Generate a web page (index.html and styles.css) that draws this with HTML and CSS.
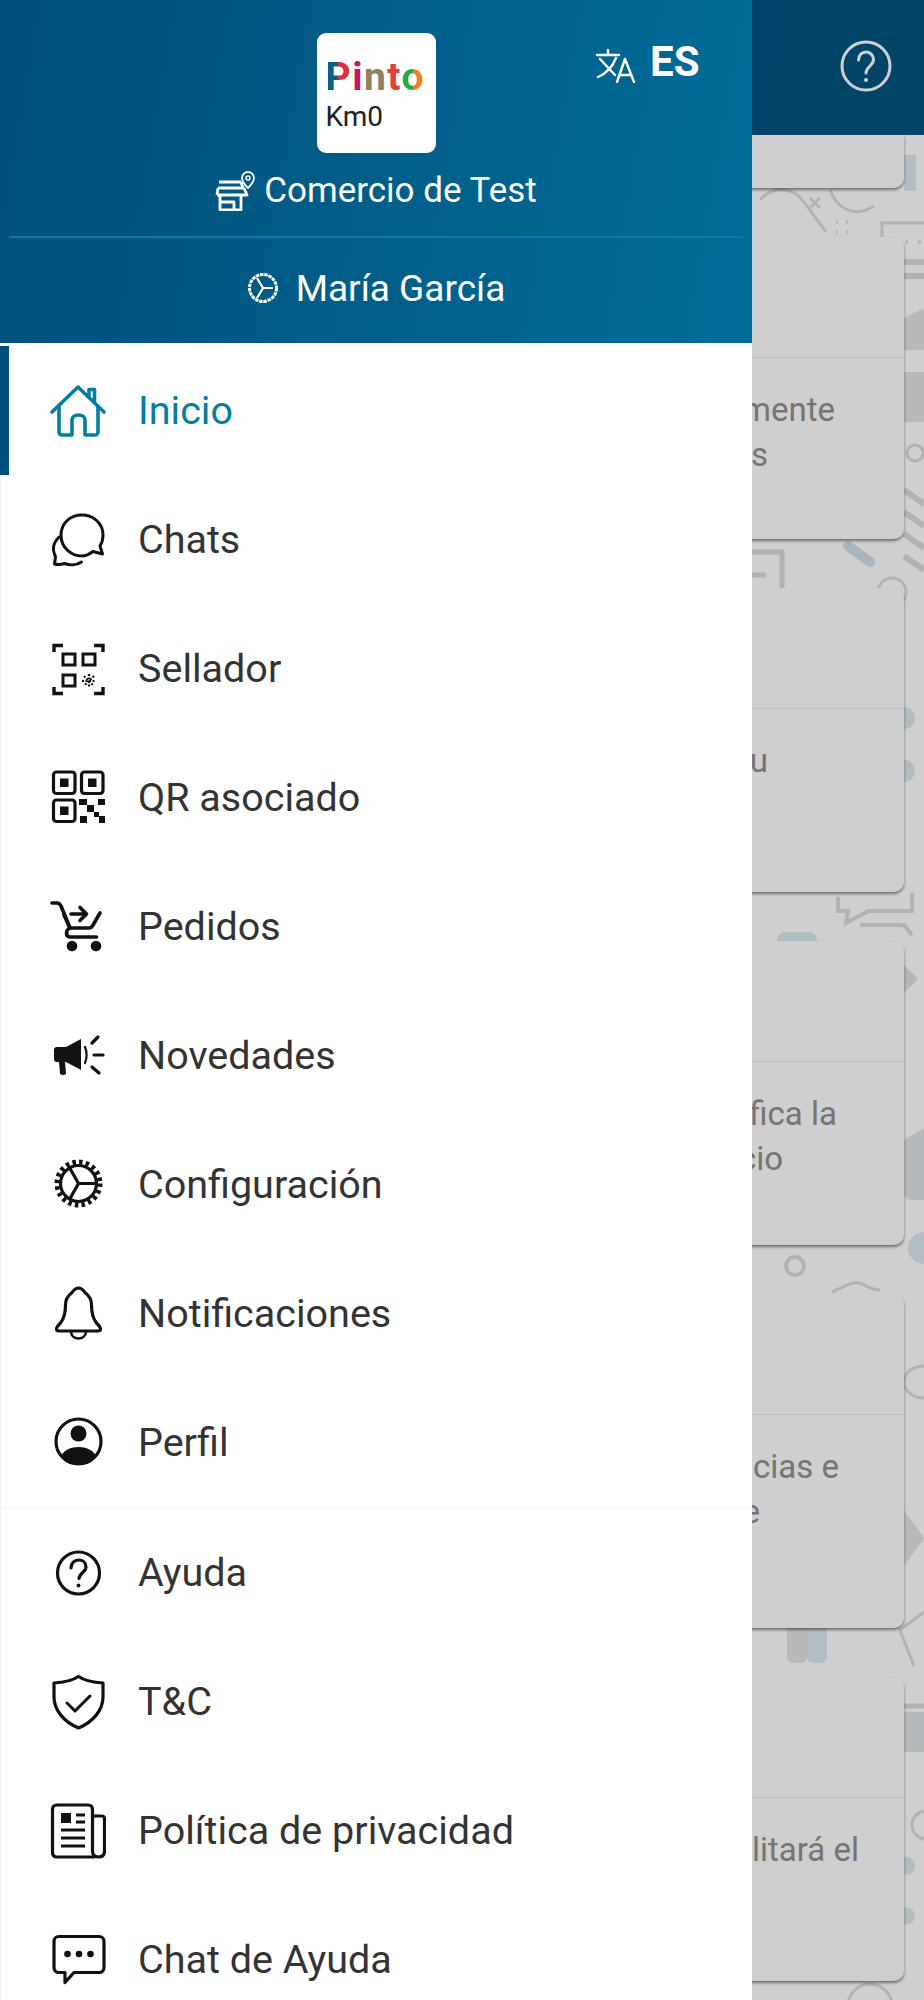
FILE: index.html
```html
<!DOCTYPE html>
<html lang="es">
<head>
  <meta charset="UTF-8">
  <meta name="viewport" content="width=device-width, initial-scale=1.0">
  <title>Pinto Km0</title>
  <link rel="stylesheet" href="styles.css">
</head>
<body>
  <div class="app">
    <!-- pantalla de fondo -->
    <svg class="wallpaper" viewBox="724 0 200 2000" width="200" height="2000" fill="none" stroke="#dcdcdc" stroke-width="3">
      <rect x="904" y="155" width="12" height="36" fill="#dce9ef" stroke="none"/>
      <path d="M760 200c14-16 34-12 44 2l22 30M830 190c6 16 22 30 44 16M882 237v-14h42"/>
      <path d="M810 198l10 10M820 198l-10 10" stroke="#cfe0ea"/>
      <path d="M836 222h2M846 222h2M836 232h2M846 232h2" stroke="#cfe0ea"/>
      <path d="M905 242h3M918 242h3" stroke="#cfe0ea"/>
      <path d="M904 262h20M904 276h20" stroke-width="6"/>
      <path d="M904 318l20-10v42h-20z" fill="#e4e4e4" stroke="none"/>
      <rect x="904" y="372" width="20" height="50" fill="#e4e4e4" stroke="none"/>
      <circle cx="915" cy="453" r="8"/>
      <path d="M904 490l20 14M904 512l20 14M904 534l20 14M904 556l20 14" stroke-width="6"/>
      <path d="M752 552h30v36M752 575h14" stroke-width="5"/>
      <path d="M848 546l22 16" stroke="#cfe0ea" stroke-width="10" stroke-linecap="round"/>
      <circle cx="892" cy="592" r="14"/>
      <circle cx="904" cy="718" r="11" fill="#dce9ef" stroke="none"/>
      <circle cx="904" cy="771" r="11" fill="#dce9ef" stroke="none"/>
      <path d="M838 897v14h10l-2 12 22-12h44v-18M860 925h44l8 10" stroke-width="4"/>
      <rect x="777" y="932" width="40" height="16" rx="8" fill="#dce9ef" stroke="none"/>
      <path d="M904 965l14 14-14 14z" fill="#e0e0e0" stroke="none"/>
      <path d="M904 1140l20-12v72h-14l-6-4z" fill="#dfe5e8" stroke="none"/>
      <circle cx="924" cy="1248" r="16" fill="#dce9ef" stroke="none"/>
      <circle cx="795" cy="1266" r="9" stroke-width="4"/>
      <path d="M832 1292c14-6 22-12 30-8s12 6 18 6"/>
      <ellipse cx="924" cy="1382" rx="20" ry="16"/>
      <path d="M904 1510l20 28-20 28z" fill="#e4e4e4" stroke="none"/>
      <rect x="787" y="1625" width="20" height="38" rx="6" fill="#e4e4e4" stroke="none"/>
      <rect x="807" y="1625" width="20" height="38" rx="6" fill="#dce9ef" stroke="none"/>
      <path d="M924 1612l-24 18 14 36"/>
      <path d="M904 1706h20" stroke-width="5"/>
      <rect x="904" y="1712" width="20" height="40" fill="#dfe5e8" stroke="none"/>
      <circle cx="926" cy="1825" r="14"/>
      <circle cx="906" cy="1866" r="9" fill="#dce9ef" stroke="none"/>
      <circle cx="906" cy="1916" r="9" fill="#dce9ef" stroke="none"/>
      <ellipse cx="870" cy="2006" rx="22" ry="22"/>
    </svg>

    <header class="topbar">
      <svg class="help-icon" viewBox="0 0 52 52" fill="none" stroke="#fff" stroke-width="3" stroke-linecap="round">
        <circle cx="26" cy="26" r="24"/>
        <path d="M18.500 20c0-5 3.500-8 7.500-8s7.500 3 7.500 7.500c0 6.500-7.500 7-7.500 13.500"/>
        <circle cx="26" cy="40" r="1.300" fill="#fff" stroke-width="1.500"/>
      </svg>
    </header>

    <main class="cards">
      <section class="card card-stub"></section>
      <section class="card card-short">
        <div class="card-head"></div>
        <div class="card-body"><p class="end-835">mente</p><p class="end-768">s</p></div>
      </section>
      <section class="card">
        <div class="card-head"></div>
        <div class="card-body"><p class="end-768">u</p></div>
      </section>
      <section class="card">
        <div class="card-head"></div>
        <div class="card-body"><p class="end-837">fica la</p><p class="end-783">cio</p></div>
      </section>
      <section class="card card-tall">
        <div class="card-head"></div>
        <div class="card-body"><p class="end-839">cias e</p><p class="end-760">e</p></div>
      </section>
      <section class="card">
        <div class="card-head"></div>
        <div class="card-body"><p class="end-859">litará el</p></div>
      </section>
    </main>

    <div class="backdrop"></div>

    <nav class="drawer">
      <div class="drawer-header">
        <div class="lang">
          <svg class="lang-icon" viewBox="0 0 40 34" fill="none" stroke="#fff" stroke-width="2.400" stroke-linecap="round" stroke-linejoin="round">
            <path d="M1 6h22M12 1v5M4 10l15 16M20 9C17 17 11 24 2 28M21 33l8-23 9 23M24 26h11"/>
          </svg>
          <span>ES</span>
        </div>
        <div class="brand">
          <div class="logo">
            <div class="logo-name"><span class="l-p">P</span><span class="l-i">i</span><span class="l-n">n</span><span class="l-t">t</span><span class="l-o">o</span></div>
            <div class="logo-sub">Km0</div>
          </div>
          <div class="shop">
            <svg class="shop-icon" viewBox="0 0 40 40" fill="none" stroke="#fff" stroke-width="2.800" stroke-linejoin="round">
              <path d="M4 11h22M3 17h25M2 24h30l-3-7M3 17l-1 7M5 24v15h21V24M5 31h14v8M26 11l2 6"/>
              <path d="M33 1c3 0 6 2.500 6 6 0 4-6 10-6 10s-6-6-6-10c0-3.500 3-6 6-6z" stroke-width="1.800"/>
              <circle cx="33" cy="7" r="2" stroke-width="1.500"/>
            </svg>
            <span>Comercio de Test</span>
          </div>
        </div>
        <div class="user">
          <svg class="user-icon" viewBox="0 0 32 32" fill="none" stroke="#fff" stroke-width="3">
            <circle cx="16" cy="16" r="13.500" stroke-dasharray="3.500 .8"/>
            <path d="M16 16h10M16 16L10 6M16 16l-6 10" stroke-width="2.200"/>
          </svg>
          <span>María García</span>
        </div>
      </div>

      <ul class="menu">
        <li class="menu-item active">
          <svg class="menu-icon" viewBox="0 0 56 56" fill="none" stroke="#007fa3" stroke-width="3.600" stroke-linecap="round" stroke-linejoin="round">
            <path d="M2 29L28 4l26 25M39 14V6.500h5.500V19"/>
            <path d="M9 24v24c0 3 1 4 3.500 4H22V37c0-3 2.500-5 6.500-5s6.500 2 6.500 5v15h9.500c2.500 0 3.500-1 3.500-4V24"/>
          </svg>
          <span>Inicio</span>
        </li>
        <li class="menu-item">
          <svg class="menu-icon" viewBox="0 0 56 56" fill="none" stroke="#111" stroke-width="3" stroke-linecap="round" stroke-linejoin="round">
            <path d="M32 3c11 0 21 8 21 20 0 4-1 8-3 11l2.500 8-9.500-2.500C39 42.500 35.500 44 32 44c-11.500 0-21-9-21-21S20.500 3 32 3z"/>
            <path d="M9 25c-4 4-6 8-5.500 13 .2 3 1.500 5 2 7l-1 7c3.500 1 7 .5 10-.5 5 2 12 2 17-1.500"/>
          </svg>
          <span>Chats</span>
        </li>
        <li class="menu-item">
          <svg class="menu-icon" viewBox="0 0 56 56" fill="none" stroke="#111" stroke-width="3">
            <path d="M4 11V4.500h9M53 11V4.500h-9M4 46v6.500h9M53 46v6.500h-9" stroke-width="3.400"/>
            <rect x="13" y="13" width="12" height="11"/>
            <rect x="33" y="13" width="12" height="11"/>
            <rect x="13" y="34" width="12" height="11"/>
            <path d="M34 35l10 10M44 35L34 45M39 33v14M32 40h14" stroke-width="2.200" stroke-dasharray="2 1.500"/>
          </svg>
          <span>Sellador</span>
        </li>
        <li class="menu-item">
          <svg class="menu-icon" viewBox="0 0 56 56" fill="#111" stroke="none">
            <g fill="none" stroke="#111" stroke-width="3.200">
              <rect x="3.500" y="2" width="21.500" height="21.500" rx="3"/>
              <rect x="31.500" y="2" width="21.500" height="21.500" rx="3"/>
              <rect x="3.500" y="30" width="21.500" height="21.500" rx="3"/>
            </g>
            <rect x="10" y="8.500" width="8.500" height="8.500"/>
            <rect x="38" y="8.500" width="8.500" height="8.500"/>
            <rect x="10" y="36.500" width="8.500" height="8.500"/>
            <path d="M29 29h8v6h-8zM48 29h7v6h-7zM37 35h7v7h-7zM44 42h5v5h-5zM49 46h6v7h-6zM30 46h7v7h-7z"/>
          </svg>
          <span>QR asociado</span>
        </li>
        <li class="menu-item">
          <svg class="menu-icon" viewBox="0 0 56 56" fill="none" stroke="#111" stroke-width="3.600" stroke-linecap="round" stroke-linejoin="round">
            <path d="M2 4h5c2 0 3 1 4 3l9 22c-2 1-3.500 3-3.500 5 0 2.500 1.500 4 4 4h26"/>
            <path d="M14 16l6 13h19c2 0 3-1 4-3l7-12"/>
            <path d="M21 15h15M30 8.500l6.500 6.500-6.500 6.500"/>
            <circle cx="22" cy="47" r="3.500" fill="#111"/>
            <circle cx="46" cy="47" r="3.500" fill="#111"/>
          </svg>
          <span>Pedidos</span>
        </li>
        <li class="menu-item">
          <svg class="menu-icon" viewBox="0 0 56 56" fill="none" stroke="#111" stroke-width="3.200" stroke-linecap="round">
            <path d="M4 22c0-2 1-3 3-3h9l15-8v31l-15-8h-1l1 11c0 1-1 2-2.500 2h-1c-1.500 0-2.500-1-2.500-2l-1-11H7c-2 0-3-1-3-3z" fill="#111" stroke="none"/>
            <path d="M35 19c2 5 2 11 0 16" stroke-width="2.200"/>
            <path d="M44 27h9M42 15l6-6M42 39l7 6"/>
          </svg>
          <span>Novedades</span>
        </li>
        <li class="menu-item">
          <svg class="menu-icon" viewBox="0 0 56 56" fill="none" stroke="#111">
            <circle cx="28.500" cy="26.500" r="21.500" stroke-width="5" stroke-dasharray="3.500 3.250"/>
            <circle cx="28.500" cy="26.500" r="18" stroke-width="3.200"/>
            <path d="M28.500 26.500H46M28.500 26.500L20 11.500M28.500 26.500L20 41.500" stroke-width="3.200"/>
          </svg>
          <span>Configuración</span>
        </li>
        <li class="menu-item">
          <svg class="menu-icon" viewBox="0 0 56 56" fill="none" stroke="#111" stroke-width="3.200" stroke-linecap="round" stroke-linejoin="round">
            <path d="M28.500 2c4 0 5 3 7 5 4 3 6 7 6 12 0 7 1 13 5 18 2 2 4 4 4 6 0 1.500-1 2-2.500 2H9c-1.500 0-2.500-.5-2.500-2 0-2 2-4 4-6 4-5 5-11 5-18 0-5 2-9 6-12 2-2 3-5 7-5z"/>
            <path d="M21 45c0 5 3.500 7.500 7.500 7.500S36 50 36 45" stroke-width="2.600"/>
          </svg>
          <span>Notificaciones</span>
        </li>
        <li class="menu-item">
          <svg class="menu-icon" viewBox="0 0 56 56" fill="none" stroke="#111" stroke-width="3.200">
            <circle cx="28.500" cy="26.500" r="22.500"/>
            <circle cx="28.500" cy="18.500" r="8" fill="#111" stroke="none"/>
            <path d="M11 41c3-6 10-9 17.500-9S43 35 46 41c-4 5-10 8-17.500 8S15 46 11 41z" fill="#111" stroke="none"/>
          </svg>
          <span>Perfil</span>
        </li>
      </ul>

      <ul class="menu menu-extra">
        <li class="menu-item">
          <svg class="menu-icon" viewBox="0 0 56 56" fill="none" stroke="#111" stroke-width="3.200" stroke-linecap="round">
            <circle cx="28.500" cy="28" r="21"/>
            <path d="M21 23c0-5 3.500-8 7.500-8s7.500 2.500 7.500 7c0 5.500-7 6-7 11.500"/>
            <circle cx="28.500" cy="40.500" r="1.200" fill="#111" stroke-width="1.600"/>
          </svg>
          <span>Ayuda</span>
        </li>
        <li class="menu-item">
          <svg class="menu-icon" viewBox="0 0 56 56" fill="none" stroke="#111" stroke-width="3.200" stroke-linecap="round" stroke-linejoin="round">
            <path d="M28.500 2.500c6 4 14 6 24.500 6.500v14c0 13-10 25-24.500 31C14 48 4 36 4 23V9c10.500-.5 18.500-2.500 24.500-6.500z"/>
            <path d="M17 29l8 8 15-15" stroke-width="3"/>
          </svg>
          <span>T&amp;C</span>
        </li>
        <li class="menu-item">
          <svg class="menu-icon" viewBox="0 0 56 56" fill="none" stroke="#111" stroke-width="3.200" stroke-linejoin="round">
            <path d="M45 54H7c-3 0-4.500-1.500-4.500-4.500V6.500C2.500 3.500 4 2 7 2h31c3 0 4.500 1.500 4.500 4.500V48c0 3.500 1.500 6 6 6s6-2.500 6-6V16c0-2-1-3-3-3h-9"/>
            <rect x="11" y="10" width="10" height="10" fill="#111" stroke="none"/>
            <path d="M26 12h9M26 19h9M11 27h24M11 35h24M11 43h24" stroke-width="3"/>
          </svg>
          <span>Política de privacidad</span>
        </li>
        <li class="menu-item">
          <svg class="menu-icon" viewBox="0 0 56 56" fill="none" stroke="#111" stroke-width="3.200" stroke-linejoin="round">
            <path d="M9 4.500h40c3 0 5 2 5 5v26c0 3-2 5-5 5H24l-9 10v-10H9c-3 0-5-2-5-5v-26c0-3 2-5 5-5z"/>
            <circle cx="17.500" cy="22" r="3.300" fill="#111" stroke="none"/>
            <circle cx="29" cy="22" r="3.300" fill="#111" stroke="none"/>
            <circle cx="40.500" cy="22" r="3.300" fill="#111" stroke="none"/>
          </svg>
          <span>Chat de Ayuda</span>
        </li>
      </ul>
    </nav>
  </div>
</body>
</html>
```

FILE: styles.css
```css
* {
  box-sizing: border-box;
}
html, body {
  margin: 0;
  padding: 0;
  height: 2000px;
  overflow: hidden;
  font-family: Roboto, "Liberation Sans", sans-serif;
}
.app {
  position: relative;
  width: 924px;
  height: 2000px;
  overflow: hidden;
  background-color: #fff;
}
.wallpaper {
  position: absolute;
  top: 0;
  right: 0;
}

/* barra superior */
.topbar {
  position: relative;
  display: flex;
  justify-content: flex-end;
  align-items: flex-start;
  height: 135px;
  padding: 40px 32px 0 0;
  background: linear-gradient(100deg, #005f90, #00547f);
}
.help-icon {
  width: 52px;
  height: 52px;
}

/* tarjetas */
.cards {
  position: relative;
  display: flex;
  flex-direction: column;
  gap: 49px;
  padding: 0 20px;
}
.card {
  height: 304px;
  background-color: #fff;
  border-radius: 10px;
  box-shadow: 0 2px 3px rgba(0, 0, 0, 0.45);
}
.card-stub {
  height: 53px;
  border-radius: 0 0 10px 10px;
}
.card-short {
  height: 302px;
}
.card-tall {
  height: 334px;
}
.card-head {
  height: 121px;
  border-bottom: 1px solid #eceff2;
}
.card-body {
  padding-top: 29px;
  font-size: 33px;
  line-height: 45px;
  color: #919191;
  text-align: right;
}
.card-body p {
  margin: 0;
  white-space: nowrap;
}
.end-760 { padding-right: 144px; }
.end-768 { padding-right: 136px; }
.end-783 { padding-right: 121px; }
.end-835 { padding-right: 69px; }
.end-837 { padding-right: 67px; }
.end-839 { padding-right: 65px; }
.end-859 { padding-right: 45px; }

.backdrop {
  position: absolute;
  top: 0;
  left: 0;
  right: 0;
  bottom: 0;
  background-color: rgba(0, 0, 0, 0.19);
}

/* menu lateral */
.drawer {
  position: absolute;
  top: 0;
  left: 0;
  width: 752px;
  height: 2000px;
  overflow: hidden;
  background-color: #fff;
}
.drawer-header {
  position: relative;
  height: 343px;
  padding: 0 9px;
  color: #fff;
  background: linear-gradient(100deg, #004f7a, #006d98);
}
.lang {
  position: absolute;
  top: 41px;
  left: 596px;
  display: flex;
  align-items: center;
  gap: 14px;
  font-size: 42px;
  font-weight: 700;
  line-height: 40px;
}
.lang-icon {
  width: 40px;
  height: 34px;
  margin-top: 8px;
}
.brand {
  display: flex;
  flex-direction: column;
  align-items: center;
  height: 238px;
  padding-top: 33px;
  border-bottom: 2px solid #0a7d9e;
}
.logo {
  width: 119px;
  height: 120px;
  padding: 21px 0 0 9px;
  background-color: #fff;
  border-radius: 9px;
  color: #222;
}
.logo-name {
  font-size: 39px;
  font-weight: 700;
  line-height: 46px;
  letter-spacing: 1.5px;
}
.logo-sub {
  font-size: 28px;
  line-height: 33px;
}
.l-p { color: #c8283f; background: linear-gradient(90deg, #0b5f85 45%, #e22b3c 45%); -webkit-background-clip: text; background-clip: text; -webkit-text-fill-color: transparent; }
.l-i { color: #c2185b; }
.l-n { color: #8f7f5e; }
.l-t { color: #e2413a; }
.l-o { background: linear-gradient(90deg, #27a844 50%, #f57c20 50%); -webkit-background-clip: text; background-clip: text; -webkit-text-fill-color: transparent; }
.shop {
  display: flex;
  align-items: center;
  gap: 9px;
  margin-top: 18px;
  font-size: 35px;
  line-height: 40px;
}
.shop-icon {
  width: 40px;
  height: 40px;
}
.user {
  display: flex;
  justify-content: center;
  align-items: center;
  gap: 17px;
  height: 100px;
  font-size: 37px;
}
.user-icon {
  width: 32px;
  height: 32px;
}
.menu {
  list-style: none;
  margin: 0;
  padding: 3px 0 0;
  border-left: 1px solid #f1f1f1;
}
.menu-extra {
  padding: 0;
  border-top: 1px solid #f2f3f7;
}
.menu-item {
  position: relative;
  display: flex;
  align-items: center;
  gap: 32px;
  height: 129px;
  padding-left: 49px;
  font-size: 39.500px;
  color: #333;
}
.menu-icon {
  width: 56px;
  height: 56px;
  flex: none;
}
.active {
  color: #007fa3;
}
.active::before {
  content: "";
  position: absolute;
  top: 0;
  bottom: 0;
  left: -1px;
  width: 9px;
  background-color: #00507c;
}
```
